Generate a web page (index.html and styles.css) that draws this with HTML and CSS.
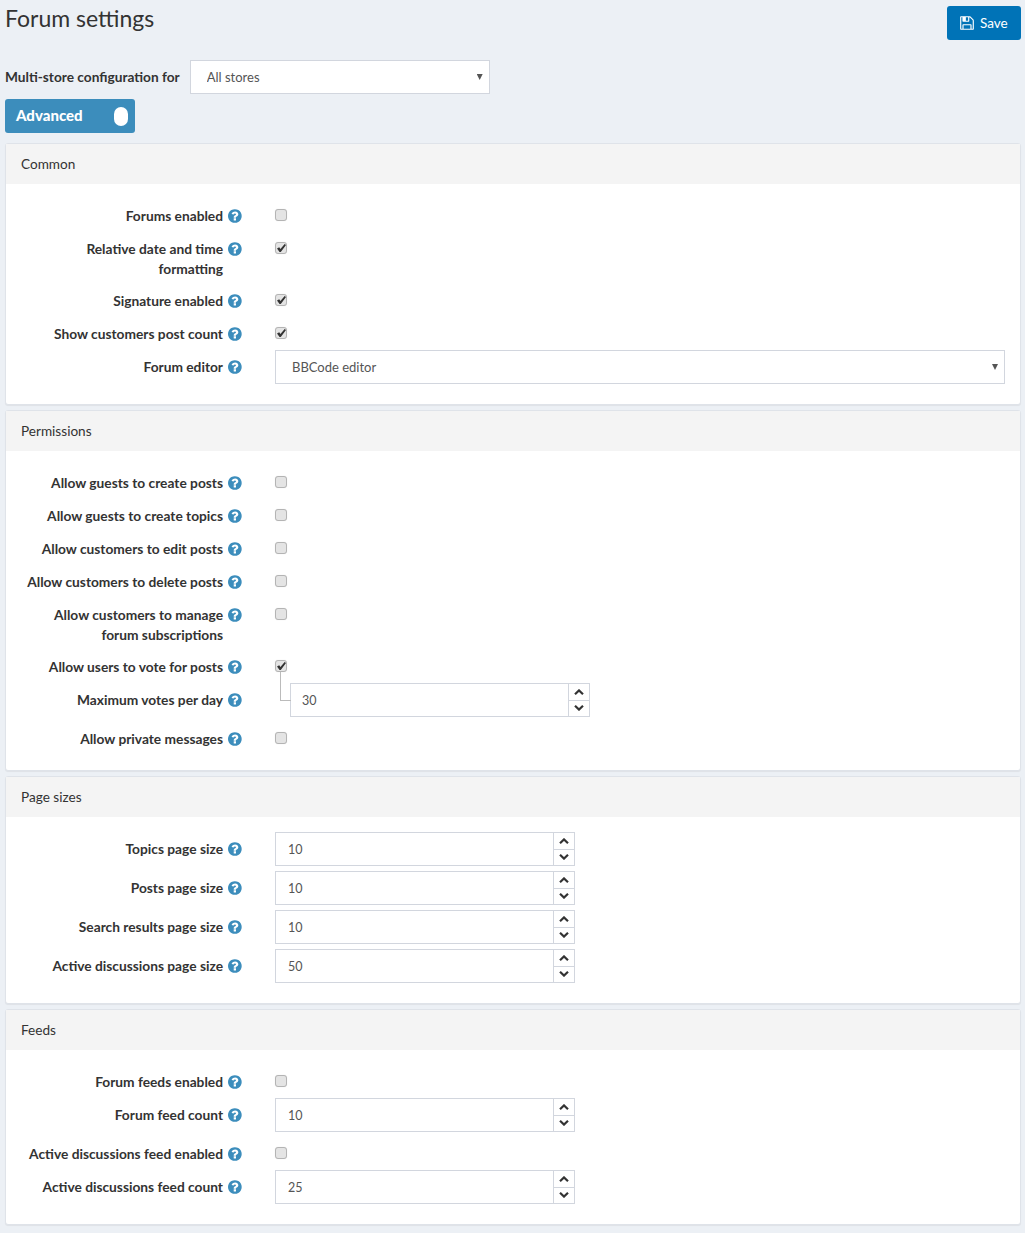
FILE: index.html
```html
<!DOCTYPE html>
<html lang="en">
<head>
<meta charset="utf-8">
<title>Forum settings</title>
<link rel="stylesheet" href="styles.css">
</head>
<body>
<svg class="sprites" aria-hidden="true">
  <symbol id="help" viewBox="0 0 1792 1792"><path d="M896 1376v-192q0-14-9-23t-23-9h-192q-14 0-23 9t-9 23v192q0 14 9 23t23 9h192q14 0 23-9t9-23zm256-672q0-88-55.500-163t-138.500-116-170-41q-243 0-371 213-15 24 8 42l132 100q7 6 19 6 16 0 25-12 53-68 86-92 34-24 86-24 48 0 85.500 26t37.500 59q0 38-20 61t-68 45q-63 28-115.500 86.500t-52.500 125.500v36q0 14 9 23t23 9h192q14 0 23-9t9-23q0-19 21.500-49.500t54.500-49.500q32-18 49-28.500t46-35 44.500-48 28-60.500 12.500-81zm384 192q0 209-103 385.500t-279.500 279.500-385.500 103-385.500-103-279.500-279.500-103-385.500 103-385.500 279.500-279.500 385.500-103 385.500 103 279.500 279.500 103 385.500z"/></symbol>
  <symbol id="up" viewBox="0 0 10 6"><path d="M1 5.200 5 1.400 9 5.200" fill="none" stroke="currentColor" stroke-width="2.200"/></symbol>
  <symbol id="down" viewBox="0 0 10 6"><path d="M1 .8 5 4.600 9 .8" fill="none" stroke="currentColor" stroke-width="2.200"/></symbol>
</svg>
<form class="page">
  <header class="topbar">
    <h1 class="title">Forum settings</h1>
    <button type="button" class="save">
      <svg class="save-icon" viewBox="0 0 1792 1792"><path d="M512 1536h768v-384h-768v384zm896 0h128v-896q0-14-10-38.500t-20-34.500l-281-281q-10-10-34-20t-39-10v416q0 40-28 68t-68 28h-576q-40 0-68-28t-28-68v-416h-128v1280h128v-416q0-40 28-68t68-28h832q40 0 68 28t28 68v416zm-384-928v-320q0-13-9.500-22.500t-22.500-9.500h-192q-13 0-22.500 9.500t-9.500 22.500v320q0 13 9.500 22.500t22.500 9.500h192q13 0 22.500-9.500t9.500-22.500zm640 32v928q0 40-28 68t-68 28h-1344q-40 0-68-28t-28-68v-1344q0-40 28-68t68-28h928q40 0 88 20t76 48l280 280q28 28 48 76t20 88z"/></svg>
      Save
    </button>
  </header>
  <div class="store">
    <span class="store-label">Multi-store configuration for</span>
    <div class="select store-select"><select><option>All stores</option></select></div>
  </div>
  <div class="toggle"><span>Advanced</span><i class="knob"></i></div>

  <section class="card">
    <h2 class="card-head">Common</h2>
    <div class="card-body">
      <div class="row check"><div class="label"><label>Forums enabled</label><svg class="help"><use href="#help"/></svg></div><input type="checkbox"></div>
      <div class="row check"><div class="label"><label>Relative date and time<br>formatting</label><svg class="help"><use href="#help"/></svg></div><input type="checkbox" checked></div>
      <div class="row check"><div class="label"><label>Signature enabled</label><svg class="help"><use href="#help"/></svg></div><input type="checkbox" checked></div>
      <div class="row check"><div class="label"><label>Show customers post count</label><svg class="help"><use href="#help"/></svg></div><input type="checkbox" checked></div>
      <div class="row"><div class="label"><label>Forum editor</label><svg class="help"><use href="#help"/></svg></div><div class="select wide-select"><select><option>BBCode editor</option></select></div></div>
    </div>
  </section>

  <section class="card">
    <h2 class="card-head">Permissions</h2>
    <div class="card-body">
      <div class="row check"><div class="label"><label>Allow guests to create posts</label><svg class="help"><use href="#help"/></svg></div><input type="checkbox"></div>
      <div class="row check"><div class="label"><label>Allow guests to create topics</label><svg class="help"><use href="#help"/></svg></div><input type="checkbox"></div>
      <div class="row check"><div class="label"><label>Allow customers to edit posts</label><svg class="help"><use href="#help"/></svg></div><input type="checkbox"></div>
      <div class="row check"><div class="label"><label>Allow customers to delete posts</label><svg class="help"><use href="#help"/></svg></div><input type="checkbox"></div>
      <div class="row check"><div class="label"><label>Allow customers to manage<br>forum subscriptions</label><svg class="help"><use href="#help"/></svg></div><input type="checkbox"></div>
      <div class="row check"><div class="label"><label>Allow users to vote for posts</label><svg class="help"><use href="#help"/></svg></div><input type="checkbox" checked></div>
      <div class="row"><div class="label"><label>Maximum votes per day</label><svg class="help"><use href="#help"/></svg></div><div class="number nested"><input type="text" value="30"><div class="spin"><span><svg><use href="#up"/></svg></span><span><svg><use href="#down"/></svg></span></div></div></div>
      <div class="row check"><div class="label"><label>Allow private messages</label><svg class="help"><use href="#help"/></svg></div><input type="checkbox"></div>
    </div>
  </section>

  <section class="card">
    <h2 class="card-head">Page sizes</h2>
    <div class="card-body">
      <div class="row"><div class="label"><label>Topics page size</label><svg class="help"><use href="#help"/></svg></div><div class="number"><input type="text" value="10"><div class="spin"><span><svg><use href="#up"/></svg></span><span><svg><use href="#down"/></svg></span></div></div></div>
      <div class="row"><div class="label"><label>Posts page size</label><svg class="help"><use href="#help"/></svg></div><div class="number"><input type="text" value="10"><div class="spin"><span><svg><use href="#up"/></svg></span><span><svg><use href="#down"/></svg></span></div></div></div>
      <div class="row"><div class="label"><label>Search results page size</label><svg class="help"><use href="#help"/></svg></div><div class="number"><input type="text" value="10"><div class="spin"><span><svg><use href="#up"/></svg></span><span><svg><use href="#down"/></svg></span></div></div></div>
      <div class="row"><div class="label"><label>Active discussions page size</label><svg class="help"><use href="#help"/></svg></div><div class="number"><input type="text" value="50"><div class="spin"><span><svg><use href="#up"/></svg></span><span><svg><use href="#down"/></svg></span></div></div></div>
    </div>
  </section>

  <section class="card">
    <h2 class="card-head">Feeds</h2>
    <div class="card-body">
      <div class="row check"><div class="label"><label>Forum feeds enabled</label><svg class="help"><use href="#help"/></svg></div><input type="checkbox"></div>
      <div class="row"><div class="label"><label>Forum feed count</label><svg class="help"><use href="#help"/></svg></div><div class="number"><input type="text" value="10"><div class="spin"><span><svg><use href="#up"/></svg></span><span><svg><use href="#down"/></svg></span></div></div></div>
      <div class="row check"><div class="label"><label>Active discussions feed enabled</label><svg class="help"><use href="#help"/></svg></div><input type="checkbox"></div>
      <div class="row"><div class="label"><label>Active discussions feed count</label><svg class="help"><use href="#help"/></svg></div><div class="number"><input type="text" value="25"><div class="spin"><span><svg><use href="#up"/></svg></span><span><svg><use href="#down"/></svg></span></div></div></div>
    </div>
  </section>
</form>
</body>
</html>
```
FILE: styles.css
```css
* { box-sizing: border-box; }
html, body { margin: 0; }
body {
  background: #ecf0f5;
  color: #333;
  font-family: "Lato", "Liberation Sans", sans-serif;
  font-size: 13.75px;
  line-height: 20px;
}
.sprites { display: none; }
.page { padding: 0 4px 8px 5px; }

.topbar { display: flex; justify-content: space-between; align-items: flex-start; padding-top: 6px; height: 60px; }
.title { margin: -2px 0 0; font-size: 23px; line-height: 28px; font-weight: 400; color: #333; }
.save {
  display: flex; align-items: center; gap: 5px;
  width: 74px; height: 34px; padding: 0 0 0 12px;
  border: 0; border-radius: 3px;
  background: #0073b7; color: #fff;
  font: inherit; font-size: 13.5px;
}
.save-icon { width: 16px; height: 16px; fill: #fff; }

.store { display: flex; align-items: center; gap: 10px; height: 34px; }
.store-label { font-weight: 700; font-size: 13.7px; color: #333; }
.select { position: relative; height: 34px; }
.select::after {
  content: ""; position: absolute; right: 7px; top: 14px;
  width: 6px; height: 6px; background: #555;
  clip-path: polygon(0 0, 100% 0, 50% 100%);
  pointer-events: none;
}
.select select {
  appearance: none; display: block; width: 100%; height: 100%;
  padding: 0 16px; border: 1px solid #d2d6de; border-radius: 0;
  background: #fff; color: #555; font: inherit; font-size: 13px;
}
.store-select { width: 300px; }
.wide-select { flex: 1; margin-right: 15px; }

.toggle {
  display: flex; align-items: center; justify-content: space-between;
  width: 130px; height: 34px; margin-top: 5px; padding: 0 7px 2px 11px;
  border-radius: 3px; background: #3c8dbc; color: #fff;
  font-weight: 900; font-size: 15px;
}
.knob { width: 14px; height: 19px; margin-top: 2px; border-radius: 7px; background: #fff; }

.card {
  margin: 10px 0 -5px;
  background: #fff;
  border: 1px solid #dfe3e9;
  border-radius: 3px;
  box-shadow: 0 1px 1px rgba(0,0,0,.06);
}
.card-head {
  margin: 0; height: 40px; padding: 0 15px;
  background: #f4f4f4;
  font-size: 13.6px; font-weight: 400; line-height: 40px; color: #333;
}
.card-body { padding: 15px 0 15px; }

.row { display: flex; align-items: flex-start; margin-bottom: 5px; }
.label { display: flex; justify-content: flex-end; align-items: flex-start; gap: 5px; width: 238px; min-height: 28px; flex: none; margin-right: 31px; padding-top: 7px; }
.label label { text-align: right; font-weight: 700; color: #333; }
.help { width: 16px; height: 16px; margin-top: 2px; fill: #3c8dbc; flex: none; }

input[type="checkbox"] {
  appearance: none; position: relative; flex: none;
  width: 12px; height: 12px; margin: 10px 0 0;
  border: 1px solid #b4b4b4; border-radius: 3px;
  background: #e4e4e4;
  box-shadow: 0 0 1px rgba(0,0,0,.15);
}
input[type="checkbox"]:checked::after {
  content: ""; position: absolute; inset: 1px 0 1px 1px;
  background: #333;
  clip-path: polygon(0 55%, 25% 40%, 38% 62%, 85% 0, 100% 12%, 42% 100%, 28% 100%);
}

.number { position: relative; display: flex; width: 300px; height: 34px; border: 1px solid #d2d6de; background: #fff; }
.number input { flex: 1; min-width: 0; border: 0; padding: 1px 12px 0; background: transparent; color: #555; font: inherit; font-size: 12.5px; outline: 0; }
.spin { width: 21px; display: flex; flex-direction: column; border-left: 1px solid #d2d6de; color: #333; }
.spin span { flex: 1; display: flex; align-items: center; justify-content: center; }
.spin span + span { border-top: 1px solid #d2d6de; }
.spin svg { width: 10px; height: 6px; }
.nested { margin-left: 15px; }
.nested input { padding-left: 11px; }
.nested::before {
  content: ""; position: absolute; left: -11px; top: -12px;
  width: 10px; height: 28px;
  border-left: 1px solid #bbb; border-bottom: 1px solid #bbb;
}
```
